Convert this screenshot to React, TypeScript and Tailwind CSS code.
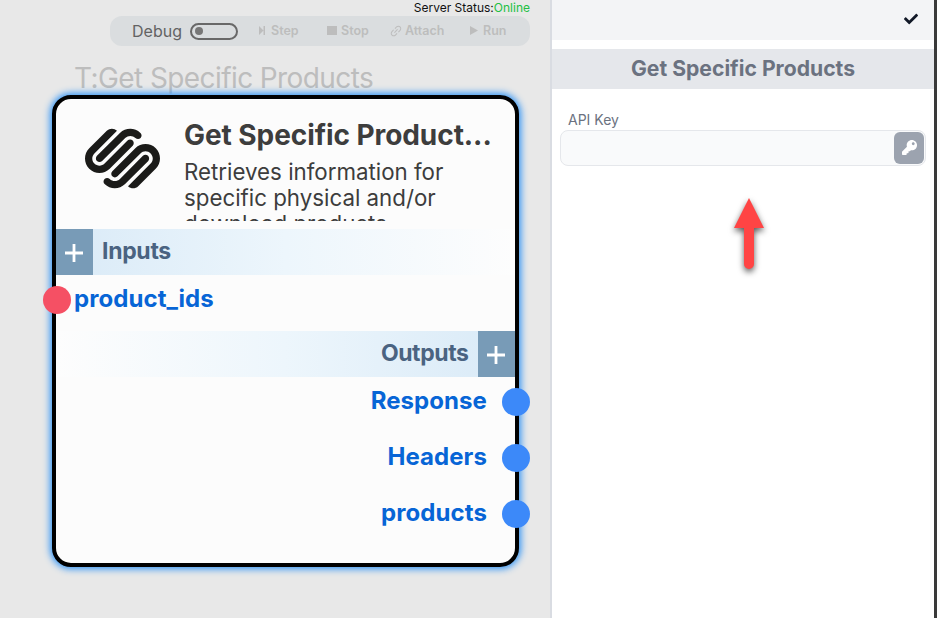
import { SiSquarespace } from "react-icons/si";
import { FaCheck, FaKey } from "react-icons/fa";
import { AiOutlineLink } from "react-icons/ai";

const outputs = ["Response", "Headers", "products"];

function DebugBar() {
  return (
    <div className="ml-[110px] flex h-[30px] w-[420px] items-center rounded-[12px] bg-[#dadddf] pl-[22px] text-[12.5px] font-semibold text-[#bdbdbd]">
      <span className="w-[58px] pb-px text-[16px] font-normal leading-[28px] text-[#636363]">Debug</span>
      <span className="flex h-[17px] w-12 items-center rounded-full border-2 border-[#686868] pl-[3px]">
        <span className="h-2 w-2 rounded-full bg-[#777]" />
      </span>
      <span className="ml-[21px] flex w-[68px] items-center gap-[6px]">
        <svg width="6" height="9" viewBox="0 0 6 9" fill="currentColor" className="-mt-[2px]">
          <path d="M0 0L4.5 4.5L0 9ZM4.5 0H6V9H4.5Z" />
        </svg>
        Step
      </span>
      <span className="flex w-[63px] items-center gap-1">
        <span className="-mt-[2px] h-[9px] w-[10px] bg-[#bdbdbd]" />
        Stop
      </span>
      <span className="flex w-[80px] items-center gap-[2px]">
        <AiOutlineLink className="-ml-px -mt-px h-[14px] w-[14px]" />
        Attach
      </span>
      <span className="flex items-center gap-[5px]">
        <svg width="8" height="9" viewBox="0 0 8 9" fill="currentColor" className="-mt-[2px]">
          <path d="M0 0L8 4.5L0 9Z" />
        </svg>
        Run
      </span>
    </div>
  );
}

function Plus() {
  return (
    <span className="flex h-full w-[37px] items-center justify-center bg-[#789bb7]">
      <svg width="19" height="18" viewBox="0 0 19 18" className="mt-[2px]">
        <path d="M9 0v18M0 9h18" stroke="#fff" strokeWidth="2.8" />
      </svg>
    </span>
  );
}

function NodeCard() {
  return (
    <div className="absolute left-[52px] top-[95px] h-[472px] w-[467px] rounded-[19px] border-4 border-black bg-[#fcfcfc] shadow-[0_0_7px_2px_#2f93f5]">
      <div className="flex h-[130px]">
        <SiSquarespace className="ml-[29px] mt-[22px] h-[75px] w-[75px] text-[#1b1b19]" />
        <div className="ml-6 mt-[19px] h-[103px] w-[320px] overflow-hidden text-[#3d3d3d]">
          <div className="whitespace-nowrap text-[28px] font-bold leading-[34px] tracking-[-0.07px]">Get Specific Product...</div>
          <div className="mt-[7px] w-[290px] text-[22.3px] leading-[26px]">
            Retrieves information for specific physical and/or download products.
          </div>
        </div>
      </div>
      <div className="flex h-[46px] bg-linear-to-r from-[#d9eaf7] via-[#edf6fc] to-[#fdfdfd]">
        <Plus />
        <span className="ml-[9px] text-[23px] font-bold leading-[44px] tracking-[-0.3px] text-[#4a6381]">Inputs</span>
      </div>
      <div className="relative flex h-[56px] items-start pl-[18px]">
        <span className="absolute -left-[13px] top-[11px] h-7 w-7 rounded-full bg-[#f55064]" />
        <span className="text-[24px] font-bold leading-[47px] tracking-[0.08px] text-[#0765d6]">product_ids</span>
      </div>
      <div className="flex h-[46px] justify-end bg-linear-to-l from-[#d9eaf7] via-[#edf6fc] to-[#fdfdfd]">
        <span className="mr-[9.5px] text-[23px] font-bold leading-[44px] tracking-[-0.4px] text-[#4a6381]">Outputs</span>
        <Plus />
      </div>
      {outputs.map((name) => (
        <div key={name} className="relative flex h-[56px] justify-end pr-[28px]">
          <span className="text-[24px] font-bold leading-[47px] tracking-[0.08px] text-[#0765d6]">{name}</span>
          <span className="absolute -right-[15px] top-[11.4px] h-7 w-7 rounded-full bg-[#3c89f9]" />
        </div>
      ))}
    </div>
  );
}

function SidePanel() {
  return (
    <div className="relative flex w-[382px] flex-col bg-white">
      <div className="flex h-10 items-center justify-end bg-[#f3f4f6] pr-4">
        <FaCheck className="-mt-[2px] h-[14px] w-[14px] text-[#111827]" />
      </div>
      <div className="mt-[9px] flex h-10 items-center justify-center bg-[#e5e7eb] pb-px text-[21.15px] font-bold text-[#6b7280]">
        Get Specific Products
      </div>
      <label className="ml-4 mt-[21px] text-[14px] leading-5 text-[#6b7280]">API Key</label>
      <div className="ml-2 flex h-9 w-[366px] items-center justify-end rounded-lg border border-[#e5e7eb] bg-[#f9fafb] pr-[1px]">
        <button className="flex h-8 w-[30px] items-center justify-center rounded-md bg-[#9ca3af] pb-[2px] text-white">
          <FaKey className="h-[15px] w-[15px]" />
        </button>
      </div>
      <svg width="60" height="90" viewBox="0 0 60 90" className="absolute left-[167px] top-[190px] drop-shadow-[0_3px_3px_rgba(0,0,0,0.65)]">
        <path d="M30 8L45 38H35V74a5 5 0 0 1-10 0V38H15Z" fill="#ff4444" />
      </svg>
    </div>
  );
}

export default function App() {
  return (
    <div className="flex h-[618px] w-[937px] overflow-hidden bg-white font-['Inter',sans-serif]">
      <div className="relative w-[552px] border-r-2 border-[#d9dce2] bg-[#e8e8e8]">
        <div className="h-4 pr-5 text-right text-[12px] leading-4 text-[#111]">
          Server Status:<span className="text-[#22c043]">Online</span>
        </div>
        <DebugBar />
        <div className="ml-[74px] mt-[15px] text-[28px] leading-[34px] tracking-[-0.59px] text-[#bdbdbd]">T:Get Specific Products</div>
        <NodeCard />
      </div>
      <SidePanel />
      <div className="w-[3px] bg-[#3a3a3a]" />
    </div>
  );
}
